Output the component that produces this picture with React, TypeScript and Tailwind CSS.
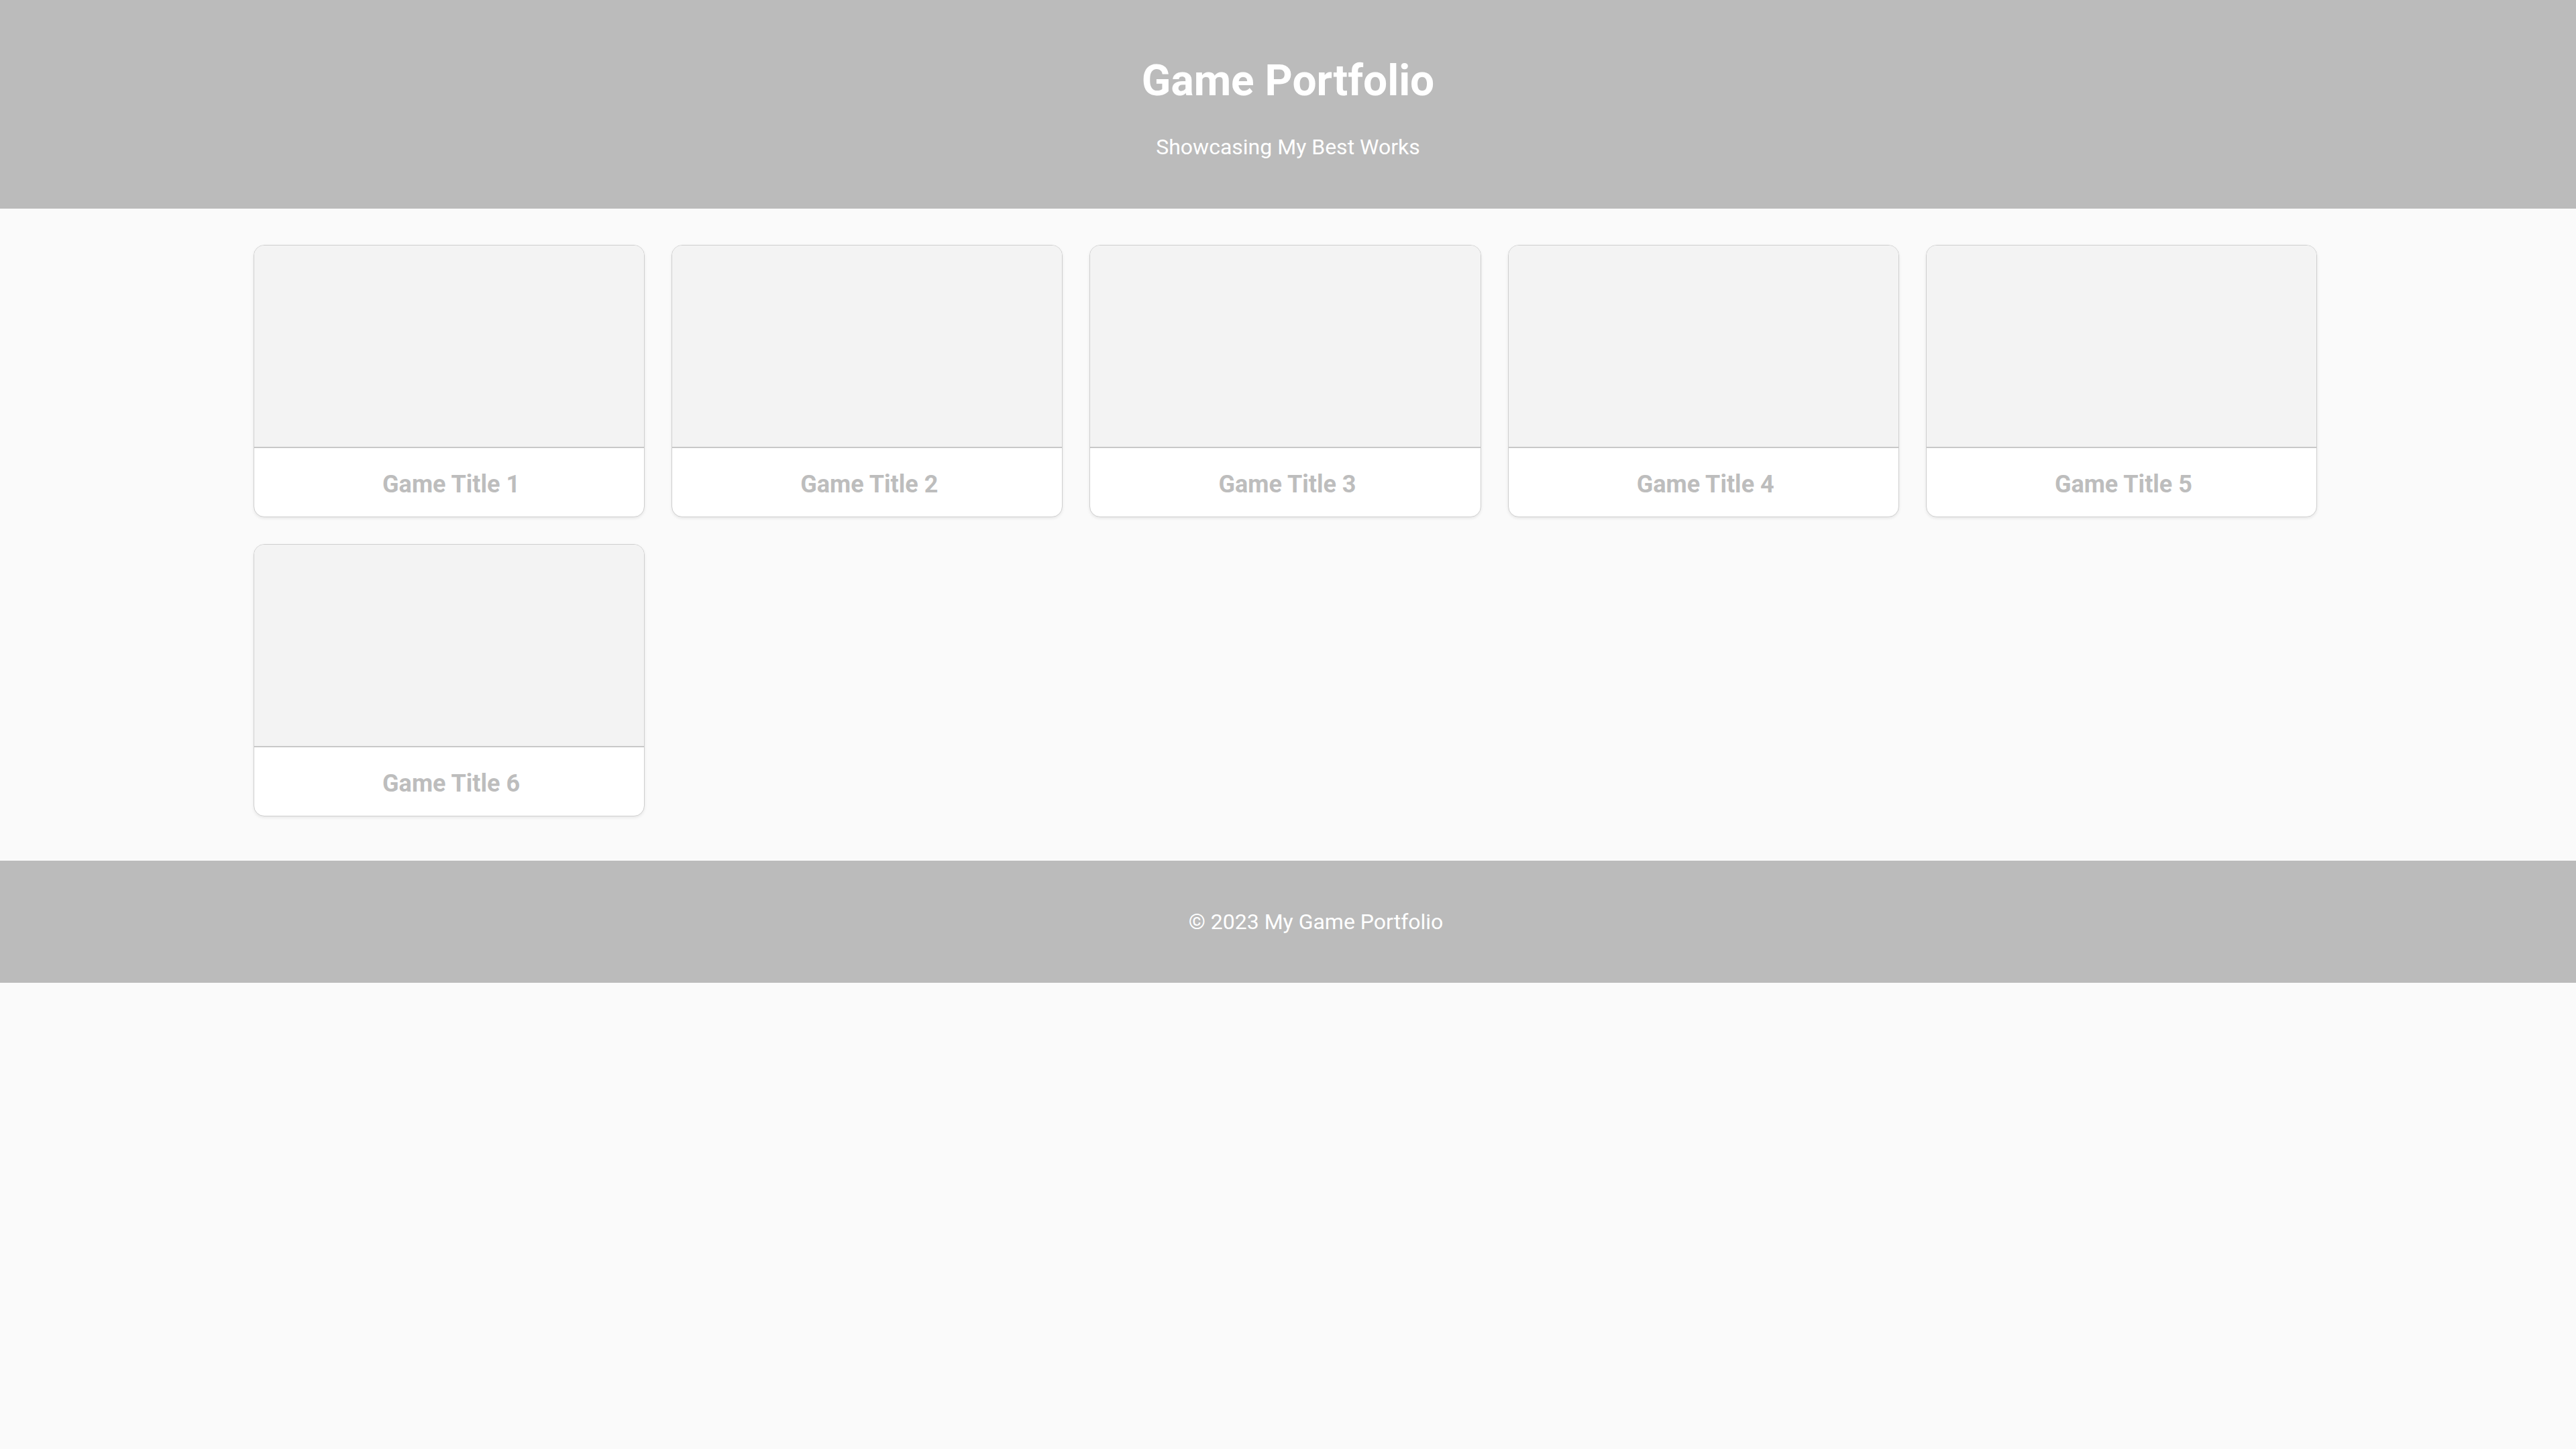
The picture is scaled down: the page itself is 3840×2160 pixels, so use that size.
import React from "react";

const games = [1, 2, 3, 4, 5, 6];

export default function App() {
  return (
    <div
      className="min-h-screen bg-[#fafafa]"
      style={{ fontFamily: "Roboto, 'Liberation Sans', sans-serif" }}
    >
      <header className="bg-[#bbbbbb] pt-[83px] pb-[73px] text-center text-white">
        <h1 className="text-[64px] leading-[75px] font-bold">Game Portfolio</h1>
        <p className="mt-[42px] text-[32px] leading-[38px]">Showcasing My Best Works</p>
      </header>

      <main className="pt-[54px] pb-[66px]">
        <div className="ml-[378px] grid w-[3076px] grid-cols-5 gap-x-[40px] gap-y-[40px]">
          {games.map((n) => (
            <div
              key={n}
              className="overflow-hidden rounded-[16px] border border-[#cfcfcf] bg-white shadow-[0_2px_4px_rgba(0,0,0,0.08)]"
            >
              <div className="h-[302px] border-b-2 border-[#c8c8c8] bg-[#f3f3f3]" />
              <div className="flex h-[102px] items-center justify-center pt-[6px] pl-[6px]">
                <span className="text-[36px] leading-[42px] font-bold text-[#bdbdbd]">
                  Game Title {n}
                </span>
              </div>
            </div>
          ))}
        </div>
      </main>

      <footer className="bg-[#bbbbbb] py-[72px] pl-[83px] text-center text-white">
        <p className="text-[32px] leading-[38px]">© 2023 My Game Portfolio</p>
      </footer>
    </div>
  );
}
